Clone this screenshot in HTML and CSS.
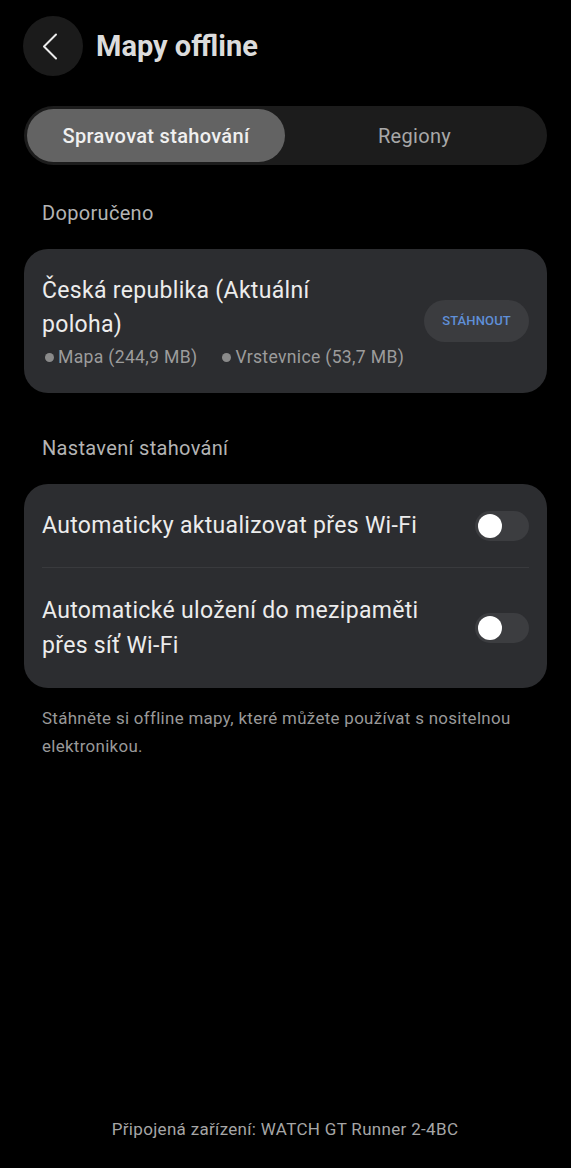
FILE: index.html
```html
<!DOCTYPE html>
<html lang="cs">
<head>
    <meta charset="UTF-8">
    <meta name="viewport" content="width=device-width, initial-scale=1.0">
    <title>Mapy offline</title>
    <link rel="stylesheet" href="styles.css">
</head>
<body>
    <div class="page">
        <header class="top-bar">
            <button class="back-btn" aria-label="Zpět">
                <svg width="16" height="27" viewBox="0 0 16 27" fill="none" stroke="#ececec" stroke-width="2" stroke-linecap="round" stroke-linejoin="round">
                    <polyline points="14,1.5 2,13.5 14,25.5"></polyline>
                </svg>
            </button>
            <h1>Mapy offline</h1>
        </header>

        <div class="tabs">
            <div class="tab active">Spravovat stahování</div>
            <div class="tab">Regiony</div>
        </div>

        <p class="section-label">Doporučeno</p>
        <div class="card region">
            <div class="region-info">
                <div class="region-name">Česká republika (Aktuální poloha)</div>
                <div class="region-meta">
                    <span><i class="dot"></i>Mapa (244,9 MB)</span>
                    <span><i class="dot"></i>Vrstevnice (53,7 MB)</span>
                </div>
            </div>
            <button class="download-btn">STÁHNOUT</button>
        </div>

        <p class="section-label">Nastavení stahování</p>
        <div class="card settings">
            <div class="setting-row">
                <span class="setting-text">Automaticky aktualizovat přes Wi-Fi</span>
                <span class="switch"><span class="knob"></span></span>
            </div>
            <div class="divider"></div>
            <div class="setting-row">
                <span class="setting-text">Automatické uložení do mezipaměti přes síť Wi-Fi</span>
                <span class="switch"><span class="knob"></span></span>
            </div>
        </div>

        <p class="note">Stáhněte si offline mapy, které můžete používat s nositelnou elektronikou.</p>

        <footer class="device">Připojená zařízení: WATCH GT Runner 2-4BC</footer>
    </div>
</body>
</html>
```

FILE: styles.css
```css
body {
    margin: 0;
    background: #000;
    color: #e8e8e8;
    font-family: Roboto, "Noto Sans", sans-serif;
    letter-spacing: 0.02em;
}
.page {
    min-height: 100vh;
    box-sizing: border-box;
    display: flex;
    flex-direction: column;
    padding: 16px 24px 0 23px;
}

/* hlavicka */
.top-bar {
    display: flex;
    align-items: center;
    gap: 13px;
}
.back-btn {
    width: 60px;
    height: 60px;
    border-radius: 50%;
    border: none;
    background: #1b1b1b;
    display: flex;
    align-items: center;
    justify-content: center;
    padding: 0 6px 0 0;
}
h1 {
    margin: 0;
    font-size: 29px;
    font-weight: 700;
    color: #dcdcdc;
    letter-spacing: 0;
}

/* prepinac zalozek */
.tabs {
    margin: 30px 0 0 1px;
    display: flex;
    padding: 3px;
    background: #1c1c1c;
    border-radius: 30px;
}
.tab {
    flex: 1;
    height: 53px;
    display: flex;
    align-items: center;
    justify-content: center;
    font-size: 20px;
    font-weight: 400;
    color: #a8a8a8;
    border-radius: 27px;
}
.tab.active {
    flex: 0 0 258px;
    background: #636363;
    color: #f0f0f0;
    font-weight: 500;
}

.section-label {
    margin: 36px 0 24px 19px;
    font-size: 20px;
    line-height: 24px;
    color: #b4b4b4;
}
.card {
    margin-left: 1px;
    background: #2c2d30;
    border-radius: 24px;
}

/* doporuceny region */
.region {
    display: flex;
    align-items: center;
    padding: 25px 18px 23px 18px;
}
.region-info {
    flex: 1;
    padding-right: 16px;
}
.region-name {
    font-size: 23px;
    line-height: 34px;
    color: #ececec;
    max-width: 330px;
}
.region-meta {
    margin-top: 2px;
    font-size: 17.6px;
    line-height: 26px;
    color: #9c9c9c;
    display: flex;
    gap: 22px;
}
.dot {
    display: inline-block;
    width: 9px;
    height: 9px;
    border-radius: 50%;
    background: #8a8a8a;
    margin: 0 4px 2px 3px;
    vertical-align: middle;
}
.download-btn {
    flex: none;
    width: 105px;
    height: 42px;
    border: none;
    border-radius: 21px;
    background: #3b3c3f;
    color: #5f8fd8;
    font-family: Roboto, sans-serif;
    font-size: 13px;
    font-weight: 500;
    letter-spacing: 0.01em;
    margin-bottom: 3px;
}
.region + .section-label {
    margin-top: 43px;
}

/* nastaveni */
.setting-row {
    display: flex;
    align-items: center;
    justify-content: space-between;
    padding: 24px 18px;
}
.setting-row + .divider + .setting-row {
    padding-top: 25px;
    padding-bottom: 25px;
}
.setting-text {
    font-size: 23px;
    line-height: 35px;
    color: #ececec;
    max-width: 400px;
}
.divider {
    height: 1px;
    background: #393a3d;
    margin: 0 18px;
}
.switch {
    flex: none;
    width: 54px;
    height: 30px;
    border-radius: 15px;
    background: #3c3d40;
    position: relative;
}
.knob {
    position: absolute;
    left: 3px;
    top: 3px;
    width: 24px;
    height: 24px;
    border-radius: 50%;
    background: #fff;
}

.note {
    margin: 16px 18px 0 19px;
    font-size: 16.9px;
    line-height: 28px;
    color: #999;
}
.device {
    margin-top: auto;
    padding-bottom: 27px;
    text-align: center;
    font-size: 17px;
    line-height: 24px;
    color: #a6a6a6;
}
```
